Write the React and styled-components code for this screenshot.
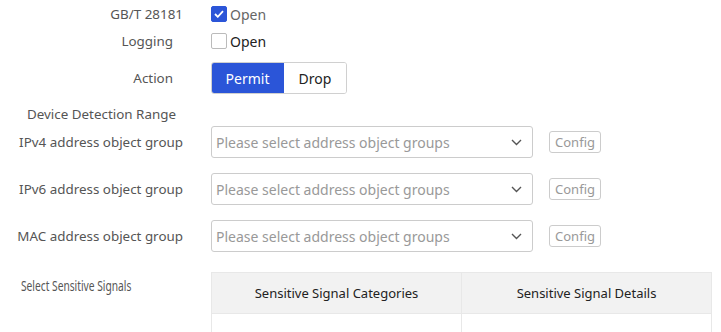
import React from 'react'
import styled, { createGlobalStyle } from 'styled-components'

const Global = createGlobalStyle`
  body {
    margin: 0;
    background: #fff;
    font-family: 'Noto Sans', 'DejaVu Sans', sans-serif;
  }
`

const Form = styled.div`
  width: 721px;
  height: 332px;
  overflow: hidden;
  display: flex;
  flex-direction: column;
`

const Row = styled.div`
  display: flex;
  flex-shrink: 0;
  align-items: ${(p) => (p.top ? 'flex-start' : 'center')};
  height: ${(p) => p.h}px;
  margin-top: ${(p) => p.mt || 0}px;
`

const Label = styled.div`
  width: 183px;
  box-sizing: border-box;
  padding-right: ${(p) => p.inset || 0}px;
  text-align: right;
  font-size: 13.4px;
  color: #555;
  flex-shrink: 0;
  margin-right: 28px;
`

const NarrowLabel = styled.div`
  width: 183px;
  box-sizing: border-box;
  padding: 4px 0 0 21px;
  margin-right: 28px;
  flex-shrink: 0;
  font-size: 14px;
  color: #555;
  white-space: nowrap;
`

const Squeeze = styled.span`
  display: inline-block;
  transform: scaleX(0.73);
  transform-origin: left center;
`

const Section = styled.div`
  flex-shrink: 0;
  padding-left: 27px;
  font-size: 13.4px;
  color: #555;
  height: 20px;
  line-height: 20px;
  margin-top: 10px;
`

const Check = styled.label`
  display: flex;
  align-items: center;
  gap: 3px;
  font-size: 14px;
  color: ${(p) => (p.checked ? '#666' : '#222')};
`

const Box = styled.span`
  width: 16px;
  height: 16px;
  box-sizing: border-box;
  border-radius: 2px;
  border: 1px solid ${(p) => (p.checked ? '#2b55d8' : '#bbb')};
  background: ${(p) => (p.checked ? '#2b55d8' : '#fff')};
  display: flex;
  align-items: center;
  justify-content: center;
`

const Segment = styled.div`
  display: flex;
  height: 32px;
  border: 1px solid #d0d0d0;
  border-radius: 3px;
  overflow: hidden;
  box-sizing: border-box;
`

const SegBtn = styled.div`
  width: ${(p) => p.w}px;
  display: flex;
  align-items: center;
  justify-content: center;
  font-size: 14px;
  background: ${(p) => (p.active ? '#2b55d8' : '#fff')};
  color: ${(p) => (p.active ? '#fff' : '#222')};
  margin: ${(p) => (p.active ? '-1px 0 -1px -1px' : '0')};
`

const Select = styled.div`
  width: 322px;
  height: 32px;
  box-sizing: border-box;
  border: 1px solid #ccc;
  border-radius: 3px;
  display: flex;
  align-items: center;
  justify-content: space-between;
  padding: 0 10px 0 4px;
  font-size: 14px;
  color: #999;
`

const ConfigBtn = styled.div`
  margin-left: 16px;
  width: 52px;
  height: 22px;
  box-sizing: border-box;
  border: 1px solid #ccc;
  border-radius: 3px;
  display: flex;
  align-items: center;
  justify-content: center;
  font-size: 13px;
  color: #999;
`

const Table = styled.div`
  width: 500px;
  display: grid;
  grid-template-columns: 250px 250px;
  border-left: 1px solid #e8e8e8;
  border-top: 1px solid #e8e8e8;
`

const Th = styled.div`
  height: 40px;
  background: #f2f2f2;
  border-right: 1px solid #e8e8e8;
  border-bottom: 1px solid #e8e8e8;
  display: flex;
  align-items: center;
  justify-content: center;
  font-size: 13px;
  color: #222;
`

const Td = styled.div`
  height: 30px;
  border-right: 1px solid #e8e8e8;
`

const Chevron = () => (
  <svg width="11" height="7" viewBox="0 0 11 7" fill="none">
    <path d="M1 1l4.5 4.5L10 1" stroke="#555" strokeWidth="1.4" />
  </svg>
)

const Tick = () => (
  <svg width="10" height="8" viewBox="0 0 10 8" fill="none">
    <path d="M1 4l2.8 2.8L9 1.2" stroke="#fff" strokeWidth="1.8" />
  </svg>
)

const groups = ['IPv4 address object group', 'IPv6 address object group', 'MAC address object group']

export default function App() {
  return (
    <Form>
      <Global />
      <Row h={28}>
        <Label>GB/T 28181</Label>
        <Check checked>
          <Box checked>
            <Tick />
          </Box>
          Open
        </Check>
      </Row>
      <Row h={26}>
        <Label inset={10}>Logging</Label>
        <Check>
          <Box />
          Open
        </Check>
      </Row>
      <Row h={32} mt={8}>
        <Label inset={10}>Action</Label>
        <Segment>
          <SegBtn active w={73}>Permit</SegBtn>
          <SegBtn w={62}>Drop</SegBtn>
        </Segment>
      </Row>
      <Section>Device Detection Range</Section>
      {groups.map((g, i) => (
        <Row h={32} mt={i === 0 ? 2 : 15} key={g}>
          <Label>{g}</Label>
          <Select>
            Please select address object groups
            <Chevron />
          </Select>
          <ConfigBtn>Config</ConfigBtn>
        </Row>
      ))}
      <Row top h={80} mt={20}>
        <NarrowLabel>
          <Squeeze>Select Sensitive Signals</Squeeze>
        </NarrowLabel>
        <Table>
          <Th>Sensitive Signal Categories</Th>
          <Th>Sensitive Signal Details</Th>
          <Td />
          <Td />
        </Table>
      </Row>
    </Form>
  )
}
